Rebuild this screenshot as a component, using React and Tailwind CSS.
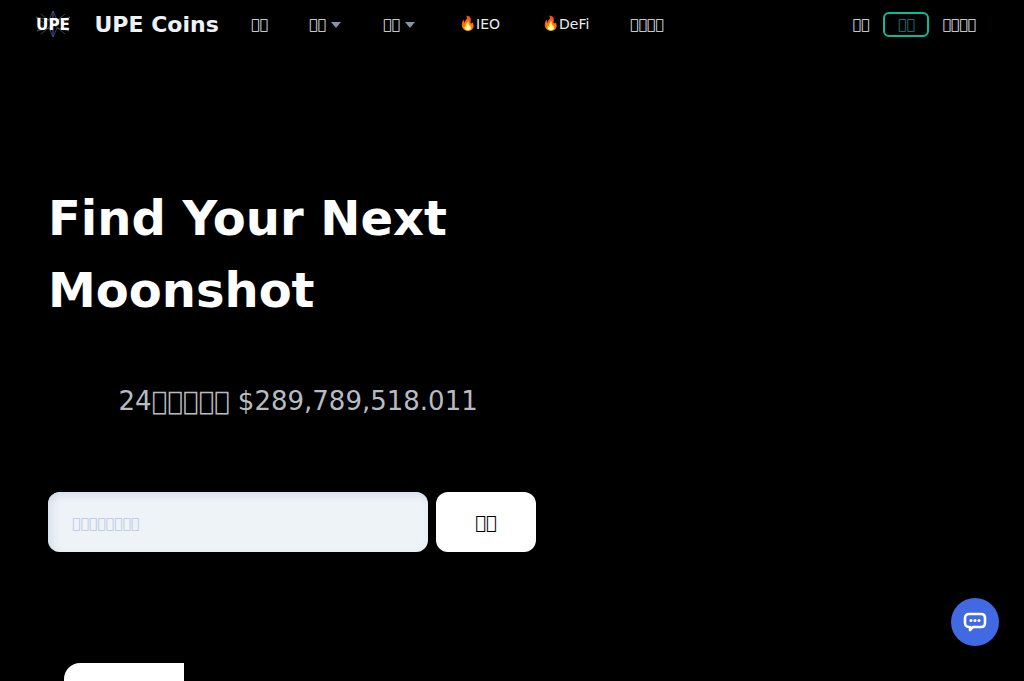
// the reference renders its labels with a font lacking the glyphs, so they come out as empty boxes
const box = (n) => "\uE000".repeat(n);

const Caret = () => (
  <span className="ml-[5px] mt-[1px] w-0 h-0 border-x-[5px] border-x-transparent border-t-[6px] border-t-[#8a93a3]" />
);

const Fire = () => <span className="text-sm leading-none -mt-[3px] -ml-[1px]">🔥</span>;

const Logo = () => (
  <svg width="36" height="28" viewBox="0 0 36 28" className="shrink-0">
    <g stroke="#7d828b" strokeWidth="0.5" fill="none">
      <path d="M18 1 L22 10 L35 7 L26 14 L34 21 L22 18 L18 27 L14 18 L2 21 L10 14 L1 7 L14 10 Z" />
      <path d="M6 4 L30 24 M30 4 L6 24" />
    </g>
    <path d="M18 1 V27" stroke="#2f5fd0" strokeWidth="1" />
    <text x="18" y="20" textAnchor="middle" fill="#fff" fontSize="16" fontWeight="700" fontFamily="'DejaVu Sans', sans-serif" textLength="34" lengthAdjust="spacingAndGlyphs">
      UPE
    </text>
  </svg>
);

const ChatIcon = () => (
  <svg width="24" height="20" viewBox="0 0 24 20" fill="none">
    <path
      d="M6 2 H18 C20.5 2 22 3.5 22 6 V11 C22 13.5 20.5 15 18 15 H10 L7 18 V15 H6 C3.5 15 2 13.5 2 11 V6 C2 3.5 3.5 2 6 2 Z"
      stroke="#fff"
      strokeWidth="2.6"
      strokeLinejoin="round"
    />
    <circle cx="8" cy="8.5" r="1.5" fill="#fff" />
    <circle cx="12" cy="8.5" r="1.5" fill="#fff" />
    <circle cx="16" cy="8.5" r="1.5" fill="#fff" />
  </svg>
);

const NavItem = ({ className, children }) => (
  <div className={`flex items-center text-sm text-[#e8eef5] ${className}`}>{children}</div>
);

export default function App() {
  return (
    <div className="relative h-screen overflow-hidden bg-black font-['DejaVu_Sans',sans-serif]">
      {/* NAVBAR */}
      <nav className="flex items-center h-12 pl-[35px] pr-12">
        <Logo />
        <span className="ml-[23.5px] text-[22px] font-bold text-[#edf2f7] w-[156.5px]">UPE Coins</span>
        <NavItem className="w-[58px]">{box(2)}</NavItem>
        <NavItem className="w-[74px]">{box(2)}<Caret /></NavItem>
        <NavItem className="w-[77px]">{box(2)}<Caret /></NavItem>
        <NavItem className="w-[83px]"><Fire />IEO</NavItem>
        <NavItem className="w-[87px]"><Fire />DeFi</NavItem>
        <NavItem>{box(4)}</NavItem>
        <div className="ml-auto flex items-center">
          <NavItem>{box(2)}</NavItem>
          <div className="ml-[14px] flex items-center justify-center w-[46px] h-[25px] rounded-md border-2 border-[#0fb89a] text-sm text-[#0e8a8a]">
            {box(2)}
          </div>
          <NavItem className="ml-[13px]">{box(4)}</NavItem>
        </div>
      </nav>

      {/* HERO */}
      <main className="pl-12">
        <h1 className="mt-[134px] w-[480px] text-5xl leading-[72px] font-bold text-white">
          Find Your Next Moonshot
        </h1>
        <p className="mt-[55px] ml-[70.5px] text-[26px] leading-[40px] text-[#b8bcc2]">
          24{box(5)} $289,789,518.011
        </p>

        {/* SEARCH */}
        <div className="mt-[71px] flex gap-2">
          <input
            placeholder={box(8)}
            className="w-[380px] h-[60px] px-6 pt-[2px] rounded-xl bg-[#eef3f8] text-sm shadow-[inset_3px_3px_8px_#d3dcea] placeholder:text-[#b9c5e6] outline-none"
          />
          <button className="w-[100px] h-[60px] pt-[2px] rounded-xl bg-white text-lg text-black">{box(2)}</button>
        </div>

        <div className="mt-[111px] ml-4 w-[120px] h-[60px] bg-white rounded-tl-2xl" />
      </main>

      {/* CHAT BUTTON */}
      <button className="absolute left-[951px] top-[598px] w-12 h-12 rounded-full bg-[#4169e1] flex items-center justify-center">
        <ChatIcon />
      </button>
    </div>
  );
}
